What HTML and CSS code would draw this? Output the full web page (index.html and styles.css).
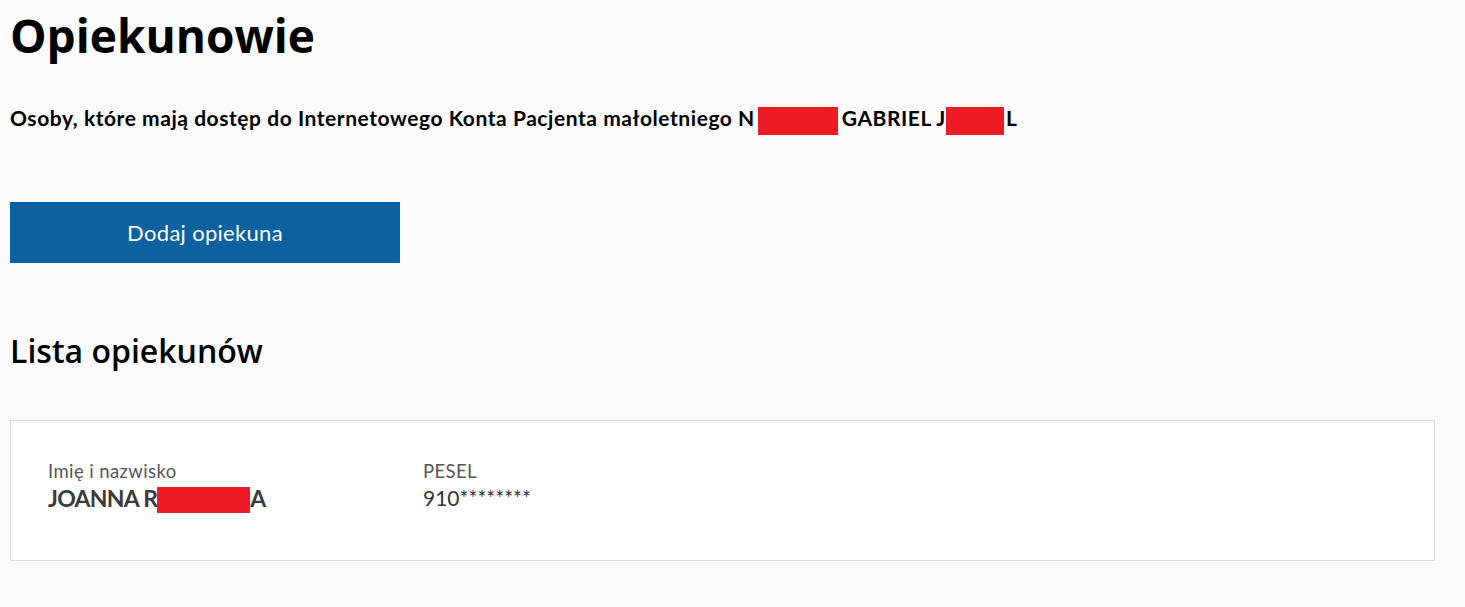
FILE: index.html
```html
<!DOCTYPE html>
<html lang="pl">
<head>
<meta charset="utf-8">
<link rel="stylesheet" href="styles.css">
</head>
<body>
<main class="page">
  <h1 class="title">Opiekunowie</h1>
  <p class="lead">Osoby, które mają dostęp do Internetowego Konta Pacjenta małoletniego N<span class="redact r1"></span>GABRIEL J<span class="redact r2"></span>L</p>
  <button class="btn">Dodaj opiekuna</button>
  <h2 class="subtitle">Lista opiekunów</h2>
  <section class="card">
    <div class="field name-field">
      <div class="label">Imię i nazwisko</div>
      <div class="value strong">JOANNA R<span class="redact r3"></span>A</div>
    </div>
    <div class="field">
      <div class="label">PESEL</div>
      <div class="value">910********</div>
    </div>
  </section>
</main>
</body>
</html>
```

FILE: styles.css
```css
* { box-sizing: border-box; }
html, body { margin: 0; padding: 0; background: #fafafa; }
body { font-family: "Open Sans", "Noto Sans", sans-serif; color: #000; }
.page { padding: 0 30px 0 10px; }
.title {
  margin: 0;
  padding-top: 5px;
  font-size: 46px;
  line-height: 60px;
  font-weight: 700;
}
.lead {
  margin: 39px 0 0;
  font-family: "Lato", sans-serif;
  font-size: 21px;
  letter-spacing: 0.55px;
  line-height: 28px;
  font-weight: 700;
}
.redact { display: inline-block; background: #ed1c24; vertical-align: middle; }
.r1 { width: 80px; height: 28px; margin: 0 4px 0 3px; }
.r2 { width: 58px; height: 28px; margin: 0 2px 0 0; }
.r3 { width: 93px; height: 26px; margin-top: -1px; }
.btn {
  display: block;
  margin-top: 67px;
  width: 390px;
  height: 61px;
  border: 0;
  background: #0c61a0;
  color: #fff;
  font-family: "Lato", sans-serif;
  font-size: 22px;
  letter-spacing: 0.3px;
  font-weight: 400;
  padding: 0;
}
.subtitle {
  margin: 68px 0 0;
  font-size: 32px;
  line-height: 40px;
  font-weight: 600;
}
.card {
  margin-top: 49px;
  background: #fff;
  border: 1px solid #dcdcdc;
  height: 141px;
  display: flex;
  padding: 38px 37px 0;
}
.field { display: flex; flex-direction: column; }
.name-field { width: 375px; }
.label { font-family: "Lato", sans-serif; font-size: 18.5px; letter-spacing: 0.4px; line-height: 24px; color: #555; }
.value { font-family: "Lato", sans-serif; font-size: 21px; line-height: 30px; color: #333; }
.strong { font-weight: 700; font-size: 23px; letter-spacing: -0.7px; color: #3a3a3a; }
```
